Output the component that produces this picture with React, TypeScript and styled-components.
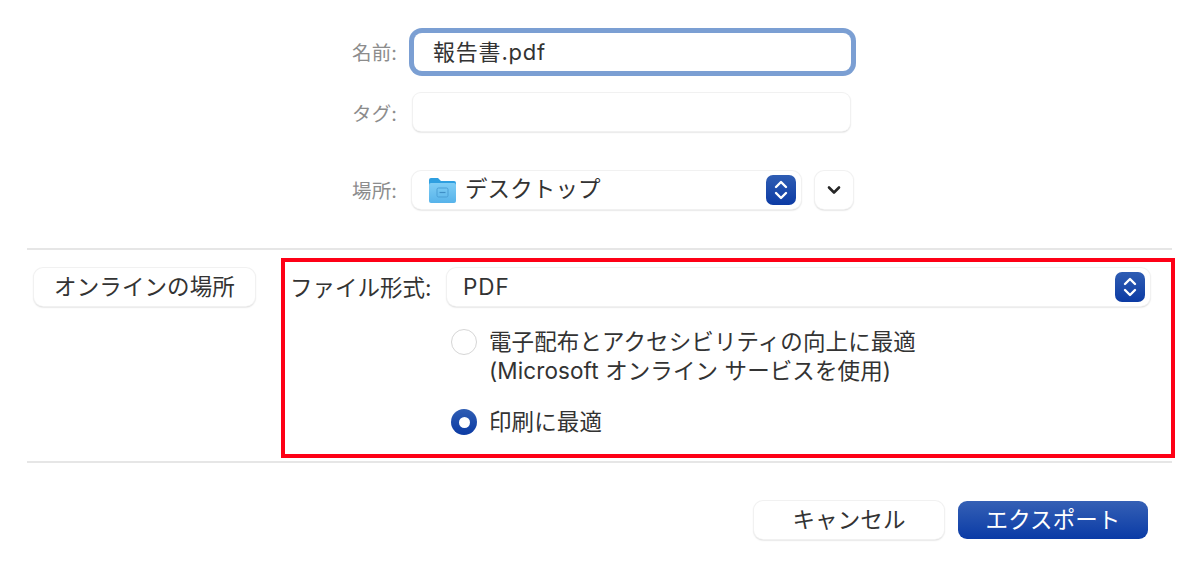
import styled, { createGlobalStyle } from "styled-components";

const GlobalStyle = createGlobalStyle`
  html, body {
    margin: 0;
    padding: 0;
    background: #fff;
  }
`;

const Page = styled.div`
  width: 1200px;
  height: 566px;
  overflow: hidden;
  box-sizing: border-box;
  padding-top: 33px;
  background: #fff;
  color: #333;
  font-family: Inter, "Noto Sans CJK JP", sans-serif;
  font-size: 22.5px;
  letter-spacing: 0.1px;
`;

const Form = styled.div`
  display: flex;
  flex-direction: column;
  gap: 22px;
`;

const Row = styled.div<{ $gap?: number }>`
  display: flex;
  align-items: center;
  margin-top: ${(p) => p.$gap ?? 0}px;
`;

const FieldLabel = styled.span<{ $lift?: number }>`
  flex: 0 0 397px;
  box-sizing: border-box;
  padding-bottom: ${(p) => p.$lift ?? 2}px;
  text-align: right;
  font-size: 19.5px;
  color: #8c8c8c;
`;

const TextField = styled.div<{ $focused?: boolean }>`
  width: 437px;
  height: 38px;
  margin-left: ${(p) => (p.$focused ? 17 : 16)}px;
  box-sizing: border-box;
  padding: 0 0 4px 19px;
  display: flex;
  align-items: center;
  border-radius: 8px;
  background: #fff;
  font-size: 22px;
  letter-spacing: 0.8px;
  box-shadow: ${(p) =>
    p.$focused
      ? "0 0 0 5px #7b9fd3"
      : "0 0 0 1px #f1f1f1, 0 1px 2px 0 #b8b8b8"};
`;

const Select = styled.div`
  height: 38px;
  box-sizing: border-box;
  display: flex;
  align-items: center;
  flex: none;
  padding: 0 5px 0 17px;
  border-radius: 9px;
  background: #fff;
  box-shadow: 0 0 0 1px #f1f1f1, 0 1px 2px 0 #b8b8b8;
`;

const LocationSelect = styled(Select)`
  width: 389px;
  margin-left: 15px;
`;

const SelectText = styled.span<{ $lift: number; $spacing?: number }>`
  flex: 1;
  white-space: nowrap;
  padding-bottom: ${(p) => p.$lift}px;
  letter-spacing: ${(p) => p.$spacing ?? 0.1}px;
`;

const Stepper = styled.span`
  width: 30px;
  height: 30px;
  flex: none;
  display: flex;
  align-items: center;
  justify-content: center;
  border-radius: 7px;
  background: linear-gradient(#2f5db3, #0c3ba4);
`;

const IconButton = styled.button`
  width: 38px;
  height: 38px;
  margin-left: 14px;
  padding: 0;
  display: flex;
  align-items: center;
  justify-content: center;
  border: none;
  border-radius: 9px;
  background: #fff;
  box-shadow: 0 0 0 1px #f1f1f1, 0 1px 2px 0 #b8b8b8;
`;

const FolderIcon = styled.svg`
  flex: none;
  margin-right: 9px;
`;

const Divider = styled.hr<{ $top: number }>`
  height: 2px;
  width: 1145px;
  margin: ${(p) => p.$top}px 0 0 27px;
  border: none;
  background: #e6e6e6;
`;

const Middle = styled.div`
  display: flex;
  align-items: flex-start;
  margin-top: 8px;
  padding-left: 34px;
`;

const PlainButton = styled.button<{ $width: number }>`
  width: ${(p) => p.$width}px;
  height: 38px;
  padding: 0 0 4px;
  flex: none;
  border: none;
  border-radius: 9px;
  background: #fff;
  color: #333;
  font: inherit;
  letter-spacing: inherit;
  box-shadow: 0 0 0 1px #f1f1f1, 0 1px 2px 0 #b8b8b8;
`;

const OnlineButton = styled(PlainButton)`
  margin-top: 10px;
`;

const Highlight = styled.section`
  width: 894px;
  height: 200px;
  margin-left: 26px;
  box-sizing: border-box;
  border: 4px solid #fe0016;
  padding: 6px 21px 0 5px;
  flex: none;
`;

const FormatRow = styled.div`
  display: flex;
  align-items: center;
`;

const FormatLabel = styled.span`
  flex: 0 0 157px;
  padding-bottom: 2px;
  white-space: nowrap;
  letter-spacing: 0;
`;

const FormatSelect = styled(Select)`
  flex: 1;
  padding-left: 16px;
`;

const Options = styled.div`
  display: flex;
  flex-direction: column;
  margin: 21px 0 0 161px;
  gap: 22px;
`;

const Option = styled.label`
  display: flex;
  align-items: flex-start;
  gap: 12px;
  line-height: 29px;
`;

const Radio = styled.span<{ $checked?: boolean }>`
  width: 26px;
  height: 26px;
  flex: none;
  margin-top: 2px;
  box-sizing: border-box;
  border-radius: 50%;
  display: flex;
  align-items: center;
  justify-content: center;
  background: ${(p) =>
    p.$checked ? "linear-gradient(#2f5db3, #0c3ba4)" : "#fff"};
  border: ${(p) => (p.$checked ? "none" : "1px solid #d6d6d6")};
  &::after {
    content: "";
    display: ${(p) => (p.$checked ? "block" : "none")};
    width: 11px;
    height: 11px;
    border-radius: 50%;
    background: #fff;
  }
`;

const Footer = styled.div`
  display: flex;
  justify-content: flex-end;
  gap: 14px;
  margin-top: 38px;
  padding-right: 52px;
`;

const PrimaryButton = styled(PlainButton)`
  color: #fff;
  background: linear-gradient(#3560b5, #0a3ba6);
  box-shadow: none;
`;

const StepperIcon = () => (
  <svg width="16" height="24" viewBox="0 0 16 24" fill="none" stroke="#fff" strokeWidth="2.4" strokeLinecap="round" strokeLinejoin="round">
    <path d="M3 9l5-5 5 5" />
    <path d="M3 15l5 5 5-5" />
  </svg>
);

const Folder = () => (
  <FolderIcon width="27" height="26" viewBox="0 0 27 26">
    <defs>
      <linearGradient id="folderBody" x1="0" y1="0" x2="0" y2="1">
        <stop offset="0" stopColor="#7fcdf5" />
        <stop offset="1" stopColor="#57b3ea" />
      </linearGradient>
    </defs>
    <path d="M0 3a2 2 0 0 1 2-2h7l3 3h13a2 2 0 0 1 2 2v4H0z" fill="#2f9fe0" />
    <rect x="0" y="6" width="27" height="20" rx="2" fill="url(#folderBody)" />
    <rect x="8" y="11" width="11" height="9" rx="1.5" fill="none" stroke="#4a9fd6" strokeWidth="1" />
    <path d="M10.5 15.5h6" stroke="#3f8fc6" strokeWidth="1.2" />
  </FolderIcon>
);

export default function App() {
  return (
    <>
      <GlobalStyle />
      <Page>
        <Form>
          <Row>
            <FieldLabel>名前:</FieldLabel>
            <TextField $focused>報告書.pdf</TextField>
          </Row>
          <Row>
            <FieldLabel $lift={0}>タグ:</FieldLabel>
            <TextField />
          </Row>
          <Row $gap={18}>
            <FieldLabel>場所:</FieldLabel>
            <LocationSelect>
              <Folder />
              <SelectText $lift={6}>デスクトップ</SelectText>
              <Stepper>
                <StepperIcon />
              </Stepper>
            </LocationSelect>
            <IconButton aria-label="展開">
              <svg width="14" height="10" viewBox="0 0 14 10" fill="none" stroke="#262626" strokeWidth="2.6" strokeLinecap="round" strokeLinejoin="round">
                <path d="M2 2.5l5 5 5-5" />
              </svg>
            </IconButton>
          </Row>
        </Form>
        <Divider $top={39} />
        <Middle>
          <OnlineButton $width={221}>オンラインの場所</OnlineButton>
          <Highlight>
            <FormatRow>
              <FormatLabel>ファイル形式:</FormatLabel>
              <FormatSelect>
                <SelectText $lift={2} $spacing={1}>PDF</SelectText>
                <Stepper>
                  <StepperIcon />
                </Stepper>
              </FormatSelect>
            </FormatRow>
            <Options>
              <Option>
                <Radio />
                <span>
                  電子配布とアクセシビリティの向上に最適
                  <br />
                  (Microsoft オンライン サービスを使用)
                </span>
              </Option>
              <Option>
                <Radio $checked />
                <span>印刷に最適</span>
              </Option>
            </Options>
          </Highlight>
        </Middle>
        <Divider $top={3} />
        <Footer>
          <PlainButton $width={190}>キャンセル</PlainButton>
          <PrimaryButton $width={190}>エクスポート</PrimaryButton>
        </Footer>
      </Page>
    </>
  );
}
